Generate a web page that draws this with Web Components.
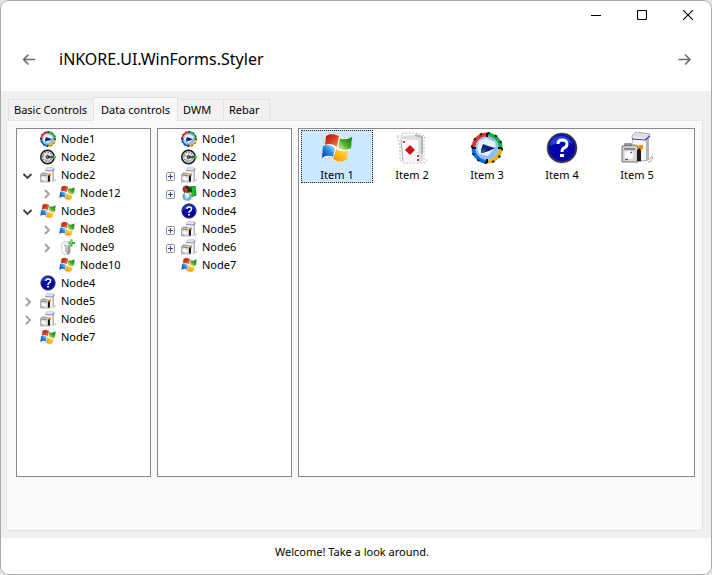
<!DOCTYPE html>
<html lang="en">
<head>
<meta charset="utf-8">
<title>iNKORE.UI.WinForms.Styler</title>
<style>
html,body{margin:0;height:100%;background:#e4e4e4;font:11px/18px "Noto Sans","Open Sans",sans-serif;color:#000}
</style>
</head>
<body>
<app-window>
  <app-header slot="header">iNKORE.UI.WinForms.Styler</app-header>
  <tab-strip slot="tabs">
    <tab-button>Basic Controls</tab-button>
    <tab-button selected>Data controls</tab-button>
    <tab-button>DWM</tab-button>
    <tab-button>Rebar</tab-button>
  </tab-strip>
  <tree-view label="Explorer tree" style="--pad:3px;--gap:4px">
    <tree-node icon="clock" label="Node1"></tree-node>
    <tree-node icon="gauge" label="Node2"></tree-node>
    <tree-node icon="box" label="Node2" state="open">
      <tree-node icon="flag" label="Node12" state="closed"></tree-node>
    </tree-node>
    <tree-node icon="flag" label="Node3" state="open">
      <tree-node icon="flag" label="Node8" state="closed"></tree-node>
      <tree-node icon="add" label="Node9" state="closed"></tree-node>
      <tree-node icon="flag" label="Node10"></tree-node>
    </tree-node>
    <tree-node icon="help" label="Node4"></tree-node>
    <tree-node icon="box" label="Node5" state="closed"></tree-node>
    <tree-node icon="box" label="Node6" state="closed"></tree-node>
    <tree-node icon="flag" label="Node7"></tree-node>
  </tree-view>
  <tree-view label="Classic tree" style="--pad:4px;--gap:3px">
    <tree-node icon="clock" label="Node1"></tree-node>
    <tree-node icon="gauge" label="Node2"></tree-node>
    <tree-node icon="box" label="Node2" state="plus"></tree-node>
    <tree-node icon="users" label="Node3" state="plus"></tree-node>
    <tree-node icon="help" label="Node4"></tree-node>
    <tree-node icon="box" label="Node5" state="plus"></tree-node>
    <tree-node icon="box" label="Node6" state="plus"></tree-node>
    <tree-node icon="flag" label="Node7"></tree-node>
  </tree-view>
  <list-view>
    <list-item icon="flag" selected>Item 1</list-item>
    <list-item icon="cards">Item 2</list-item>
    <list-item icon="clock">Item 3</list-item>
    <list-item icon="help">Item 4</list-item>
    <list-item icon="box">Item 5</list-item>
  </list-view>
  <span slot="status">Welcome! Take a look around.</span>
</app-window>

<script>
const ICONS = {
flag: `<defs><linearGradient id="r" x1="0" y1="0" x2="1" y2="1"><stop stop-color="#a8180c"/><stop offset=".5" stop-color="#d83c1c"/><stop offset="1" stop-color="#f49468"/></linearGradient><linearGradient id="g" x1="1" y1="0" x2="0" y2="1"><stop stop-color="#08700c"/><stop offset=".5" stop-color="#48ac24"/><stop offset="1" stop-color="#f0fcc0"/></linearGradient><linearGradient id="b" x1="0" y1="1" x2="1" y2="0"><stop stop-color="#0434a4"/><stop offset=".5" stop-color="#2484e0"/><stop offset="1" stop-color="#b4ecfc"/></linearGradient><linearGradient id="y" x1="1" y1="0" x2="0" y2="1"><stop stop-color="#fce468"/><stop offset=".5" stop-color="#fcbc1c"/><stop offset="1" stop-color="#ec8c04"/></linearGradient></defs>
<path d="M4 3l6-2 7 1 3 3 5 1 6-1v5l-2 9-3 2-1 6-6 3-7-1-2-4-4 1-5 1 0-7 2-6 1-6z" fill="#fff" stroke="#b8b8b8" stroke-width=".8" stroke-dasharray="2 2"/>
<path d="M5 4q5-4 13 0l-2 11q-6-5-12-2z" fill="url(#r)"/><path d="M19 6q5 3 12-1l-1 11q-6 4-13 0z" fill="url(#g)"/><path d="M2 14q7-3 12 2l-2 9q-6-3-11 1z" fill="url(#b)"/><path d="M15 17q6 4 12 1l-1 9q-6 5-14 0z" fill="url(#y)"/>`,
clock: `<circle cx="16" cy="16" r="15.500" fill="#e8f2ff"/><g fill="none" stroke-width="4"><path d="M16 2.500A13.500 13.500 0 0 1 29.500 16" stroke="#16b040"/><path d="M29.500 16A13.500 13.500 0 0 1 16 29.500" stroke="#ecb410"/><path d="M16 29.500A13.500 13.500 0 0 1 2.500 16" stroke="#1070e0"/><path d="M2.500 16A13.500 13.500 0 0 1 16 2.500" stroke="#e83432"/></g><circle cx="16" cy="16" r="11.500" fill="#90bcf4"/><path d="M8 9l7-3 9 4 1 4-8 10-9-2-2-6z" fill="#e4f0ff"/><circle cx="16" cy="16" r="15" fill="none" stroke="#181818" stroke-width="2" stroke-dasharray="2.500 5.350"/><path d="M16 1v4M16 27v4M1 16h4M27 16h4" stroke="#111" stroke-width="2"/><path d="M12 12l5 2 7 2-6 3-7 2-1-3z" fill="#082470"/><path d="M10 18l5-2-1 4-4 1z" fill="#1050a8"/>`,
gauge: `<circle cx="15" cy="16" r="13.500" fill="#d4d4d4" stroke="#181818" stroke-width="3"/><path d="M6 13l3-5 6-2 7 3 2 6-2 6-6 4-7-2-3-5z" fill="#eee" stroke="#555" stroke-width="2" stroke-dasharray="3 3"/><path d="M7 12l16 9M16 6l-2 20M22 9L9 23" stroke="#999" stroke-width="1.500"/><circle cx="15" cy="16" r="3" fill="#777" stroke="#222" stroke-width="1.500"/><path d="M16 16h12" stroke="#222" stroke-width="3"/><path d="M27 14h5v5h-5z" fill="#40d830"/>`,
box: `<path d="M11 4l4-4 14 2-2 4v22l-12 2z" fill="#e4e4e4" stroke="#aaa"/><path d="M12 6l14 1v21H13z" fill="#f6f6f6"/><path d="M25 7l3-4v24l-3 2z" fill="#b4b4b4"/><path d="M13 3l4-2 11 3-4 2z" fill="#dadcf8"/><path d="M11 7l13 1 5-4" stroke="#4038a8" stroke-width="1.200" fill="none"/><path d="M15 12l5 3 1-3v6l-4 2z" fill="#fcb814"/><path d="M18 13h4v4h-4z" fill="#f48c1c"/><path d="M1 14l13-1 3 2v15H1z" fill="#cecece" stroke="#777"/><path d="M4 14v-2h6v2" fill="none" stroke="#777" stroke-width="1.500"/><path d="M3 17h11" stroke="#777" stroke-width="1.500"/><path d="M3 19h11v10H3z" fill="#dedede"/><circle cx="8" cy="23" r="4" fill="#fff"/><path d="M9 21l2-1M7 27l-3 1" stroke="#333"/><path d="M16 18l3-2 1 3v10h-4z" fill="#181818"/><path d="M27 27h2l2-3 1 2-3 4h-2" fill="none" stroke="#aaa"/>`,
cards: `<path d="M1 4h5l1-3h13l9 3-1 3v20l3 1-3 3H7l-3-3V15l-1-6z" fill="#fdfdfd" stroke="#bbb" stroke-dasharray="2 1.500"/><path d="M4 7l3-3 15-1 5 3v22l-4 2" fill="#dcdcdc"/><path d="M5 7l17 1 1 22H7z" fill="#f8f8f8"/><path d="M5 8l2 21" stroke="#aaa"/><path d="M14 13l5 5-5 5-5-5z" fill="#cc1019"/><path d="M7 9h2v2H7zM21 23h2v2h-2zM21 27h2v2h-2z" fill="#d83840"/><path d="M19 3l7 2v17" fill="none" stroke="#b4b4b4" stroke-width="2"/>`,
help: `<circle cx="16" cy="16" r="15.500" fill="#b4b8d0"/><circle cx="16" cy="16" r="14" fill="#0404a8" stroke="#303050" stroke-width="2"/><path d="M4 14Q5 4 15 4q9 0 12 9Q20 6 4 14" fill="#2440e0"/><path d="M12 12q0-4 4-4 5 0 5 4 0 3-3 4-2 1-2 4" fill="none" stroke="#fff" stroke-width="3"/><path d="M14 22h4v3h-4z" fill="#fff"/>`,
users: `<path d="M14 3l15-1 2 19-9 3-7-4z" fill="#087a18"/><path d="M22 4l7-1v17l-7 3z" fill="#20b834"/><path d="M14 9l8-1-1 5-6 2z" fill="#073b0d"/><path d="M3 9q1-8 8-8 7 1 6 9l-3 6-7 1z" fill="#452214"/><path d="M7 8l6-1v8l-5 1z" fill="#a35b28"/><path d="M5 3l5-1-1 7-5 2z" fill="#b53a20"/><path d="M2 21q2-6 9-5 9-1 10 7v6l-7 3-9-2z" fill="#6cb4d8"/><path d="M7 15l9 1v8l-6 4z" fill="#dceefa"/><path d="M17 13l5 3-1 6-5-2z" fill="#e8b088"/>`,
add: `<path d="M5 9l4-4h13l1 4v18l-3 4H10l-4-4z" fill="#e8e8e8" stroke="#bbb"/><path d="M7 9h6v19l-4-1-2-4z" fill="#fff"/><path d="M18 12h4v15l-3 4h-3z" fill="#999"/><path d="M10 12l4 1v14" fill="none" stroke="#777" stroke-width="1.500"/><path d="M19 6h4V1h4v5h5v4h-5v5h-4v-5h-4z" fill="#1fb820"/><path d="M24 7V3h2v6h-5V7z" fill="#8ce860"/>`
};
function define(name, markup, setup){
  const t=document.createElement('template');
  t.innerHTML=markup;
  customElements.define(name,class extends HTMLElement{
    constructor(){super();this.attachShadow({mode:'open'}).append(t.content.cloneNode(true));}
    connectedCallback(){if(setup)setup(this,this.shadowRoot);}
  });
}
const buttonReset='button{appearance:none;border:0;background:none;margin:0;padding:0;font:inherit;color:inherit;outline:0}';

define('app-icon','<style>:host{display:block;width:16px;height:16px}svg{display:block;width:100%;height:100%}</style><svg viewBox="0 0 32 32" aria-hidden="true"></svg>',
  (h,s)=>{s.querySelector('svg').innerHTML=ICONS[h.getAttribute('name')]||'';});

define('app-window',`<style>
:host{display:flex;flex-direction:column;box-sizing:border-box;min-height:100vh;border:1px solid #a9a9a9;border-radius:9px;overflow:hidden;background:#efefef}
main{flex:1;display:flex;flex-direction:column;padding:7px 8px 7px 5px}
.panel{flex:1;display:flex;gap:6px;padding:7px 7px 53px 9px;background:#f9f9f9;border:1px solid #e4e4e4;box-sizing:border-box}
footer{background:#fff;padding:5px 20px 13px 12px;text-align:center}
</style><slot name="header"></slot><main><slot name="tabs"></slot><section class="panel"><slot></slot></section></main><footer><slot name="status"></slot></footer>`);

define('app-header',`<style>
:host{display:block;background:#fff;height:90px}
${buttonReset}
.caption{display:flex;justify-content:flex-end;height:28px}
.caption button{width:46px;height:28px;display:grid;place-items:center}
nav{display:flex;align-items:center;height:60px;padding:0 15px 0 16px}
nav button{width:24px;height:24px;display:grid;place-items:center}
h1{flex:1;margin:0;padding-left:18px;font-size:16px;line-height:24px;font-weight:400}
svg{display:block;fill:none;stroke:#6a6a6a;stroke-width:1.600;stroke-linecap:round;stroke-linejoin:round}
.caption svg{stroke:#000;stroke-width:1.100;stroke-linecap:butt}
</style>
<div class="caption">
<button aria-label="Minimize"><svg width="10" height="10"><path d="M0 5.500h10"/></svg></button>
<button aria-label="Maximize"><svg width="10" height="10"><rect x=".5" y=".5" width="9" height="9" rx="1"/></svg></button>
<button aria-label="Close"><svg width="10" height="10"><path d="M0 0l10 10M10 0L0 10"/></svg></button>
</div>
<nav><button aria-label="Back"><svg width="14" height="14"><path d="M6 3L1.500 7.500 6 12M1.500 7.500h11"/></svg></button><h1><slot></slot></h1><button aria-label="Forward"><svg width="14" height="14"><path d="M8.500 3L13 7.500 8.500 12M13 7.500H2"/></svg></button></nav>`);

define('tab-strip','<style>:host{display:flex;align-items:flex-end;padding-left:2px;height:22px}</style><slot></slot>',h=>h.setAttribute('role','tablist'));
define('tab-button',`<style>
:host{display:block;position:relative}
${buttonReset}
button{display:block;height:21px;min-width:46px;padding:0 6px 0 5px;line-height:20px;text-align:left;border:1px solid #e2e2e2;border-bottom:0;background:#f1f1f1;white-space:nowrap}
:host(:not(:first-child)) button{border-left:0}
:host([selected]) button{height:24px;padding:0 7px;background:#f9f9f9;border-left:1px solid #e2e2e2;margin:0 0 -1px -1px}
</style><button role="tab"><slot></slot></button>`,(h,s)=>s.querySelector('button').setAttribute('aria-selected',h.hasAttribute('selected')));

define('tree-view',`<style>:host{display:block;flex:0 0 135px;box-sizing:border-box;border:1px solid #828790;background:#fff;padding:1px 0 1px var(--pad)}</style><slot></slot>`,
  h=>{h.setAttribute('role','tree');h.setAttribute('aria-label',h.getAttribute('label'));});
define('tree-node',`<style>
:host{display:block}
${buttonReset}
.row{display:flex;align-items:center;height:18px}
.exp{width:16px;height:16px;margin-right:var(--gap);display:grid;place-items:center}
.exp svg{display:block;fill:none}
.name{margin-left:5px;white-space:nowrap}
.kids{padding-left:19px}
</style><div class="row"><span class="exp"></span><app-icon></app-icon><span class="name"></span></div><div class="kids"><slot></slot></div>`,
(h,s)=>{
  h.setAttribute('role','treeitem');
  s.querySelector('.name').textContent=h.getAttribute('label');
  const icon=document.createElement('app-icon');
  icon.setAttribute('name',h.getAttribute('icon'));
  s.querySelector('app-icon').replaceWith(icon);
  const glyph={
    open:'<svg width="12" height="12"><path d="M1.500 5l4 4 4-4" stroke="#404040" stroke-width="1.800"/></svg>',
    closed:'<svg width="12" height="12"><path d="M4 3l4 4-4 4" stroke="#a0a0a0" stroke-width="1.800"/></svg>',
    plus:'<svg width="10" height="12"><rect x="1.500" y="3.500" width="8" height="8" rx="1" fill="#fafafa" stroke="#919191"/><path d="M3 7.500h5M5.500 5v5" stroke="#2b4c9c"/></svg>'
  }[h.getAttribute('state')];
  if(glyph){
    const b=document.createElement('button');
    b.className='exp';b.innerHTML=glyph;
    b.setAttribute('aria-label','Toggle '+h.getAttribute('label'));
    s.querySelector('.exp').replaceWith(b);
    h.setAttribute('aria-expanded',h.getAttribute('state')==='open');
  }
});

define('list-view','<style>:host{display:flex;flex:1;flex-wrap:wrap;align-content:flex-start;min-width:0;border:1px solid #828790;background:#fff;padding-top:1px}</style><slot></slot>',
  h=>{h.setAttribute('role','listbox');h.setAttribute('aria-label','Items');});
define('list-item',`<style>
:host{display:block;width:75px}
${buttonReset}
button{display:flex;flex-direction:column;align-items:center;width:72px;height:53px;margin:0 1px 0 2px;padding:1px 0 0;box-sizing:border-box;border:1px solid transparent}
:host([selected]) button{background:#cce8ff;border:1px dotted #1c1c1c}
app-icon{width:32px;height:32px;margin-bottom:2px}
</style><button role="option"><app-icon></app-icon><span><slot></slot></span></button>`,
(h,s)=>{
  const icon=document.createElement('app-icon');
  icon.setAttribute('name',h.getAttribute('icon'));
  s.querySelector('app-icon').replaceWith(icon);
  s.querySelector('button').setAttribute('aria-selected',h.hasAttribute('selected'));
});
</script>
</body>
</html>
